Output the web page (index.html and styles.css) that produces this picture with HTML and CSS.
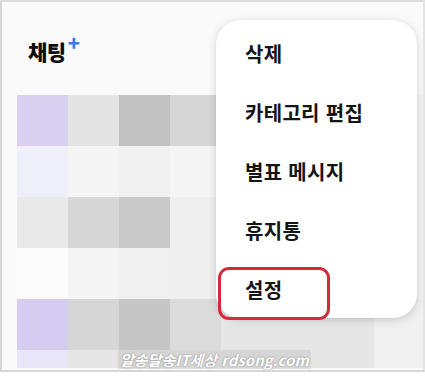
FILE: index.html
```html
<!DOCTYPE html>
<html lang="ko">
<head>
<meta charset="utf-8">
<link rel="stylesheet" href="styles.css">
</head>
<body>
<div class="frame">
  <div class="header">
    <h1 class="title">채팅<span class="plus">+</span></h1>
  </div>
  <div class="mosaic">
    <div class="t c-lav"></div><div class="t c-e4"></div><div class="t c-c2"></div><div class="t c-d6"></div><div class="t c-f0"></div><div class="t c-f4"></div><div class="t c-f4"></div><div class="t c-f4"></div>
    <div class="t c-lav2"></div><div class="t c-f5"></div><div class="t c-f1"></div><div class="t c-f5"></div><div class="t c-f4"></div><div class="t c-f4"></div><div class="t c-f4"></div><div class="t c-f4"></div>
    <div class="t c-e9"></div><div class="t c-d7"></div><div class="t c-c9"></div><div class="t c-ef"></div><div class="t c-f0"></div><div class="t c-f4"></div><div class="t c-f4"></div><div class="t c-f4"></div>
    <div class="t c-fb"></div><div class="t c-f5"></div><div class="t c-f0"></div><div class="t c-ef"></div><div class="t c-f0"></div><div class="t c-f4"></div><div class="t c-f4"></div><div class="t c-f4"></div>
    <div class="t c-lav3"></div><div class="t c-d6"></div><div class="t c-c6"></div><div class="t c-db"></div><div class="t c-e6"></div><div class="t c-e6"></div><div class="t c-e6"></div><div class="t c-f0"></div>
    <div class="t c-lav4"></div><div class="t c-e6"></div><div class="t c-e6"></div><div class="t c-e6"></div><div class="t c-e6"></div><div class="t c-e6"></div><div class="t c-e6"></div><div class="t c-f0"></div>
  </div>
  <div class="watermark">알송달송IT세상 rdsong.com</div>
  <ul class="menu">
    <li class="item">삭제</li>
    <li class="item">카테고리 편집</li>
    <li class="item">별표 메시지</li>
    <li class="item">휴지통</li>
    <li class="item">설정</li>
    <li class="highlight"></li>
  </ul>
</div>
</body>
</html>
```

FILE: styles.css
```css
* { box-sizing: border-box; }
html, body { margin: 0; padding: 0; }
body {
  width: 425px;
  height: 376px;
  overflow: hidden;
  background: #ffffff;
  font-family: "Noto Sans CJK KR", "Noto Sans", sans-serif;
}
.frame {
  position: relative;
  width: 425px;
  height: 372px;
  background: #fafafa;
  border-left: 2px solid #d6d6d6;
  border-top: 2px solid #dcdcdc;
  border-right: 2px solid #e4e4e4;
  border-bottom: 2px solid #d6d6d6;
  overflow: hidden;
}
.header {
  padding: 36px 0 0 26px;
  height: 93px;
}
.title {
  margin: 0;
  font-size: 21px;
  line-height: 26px;
  font-weight: 900;
  color: #0d0d0d;
  letter-spacing: -0.5px;
}
.plus {
  display: inline-block;
  vertical-align: top;
  margin-left: 2px;
  margin-top: -8px;
  font-size: 20px;
  font-weight: 900;
  color: #3a7cf0;
}
.mosaic {
  margin-left: 15px;
  display: grid;
  grid-template-columns: repeat(8, 51px);
  grid-template-rows: repeat(5, 51px) 18px;
}
.t { width: 51px; }
.c-lav { background: #d8d0f1; }
.c-lav2 { background: #efeffa; }
.c-lav3 { background: #d4ccf1; }
.c-lav4 { background: #e8e6f8; }
.c-e4 { background: #e4e4e4; }
.c-c2 { background: #c2c2c2; }
.c-d6 { background: #d6d6d6; }
.c-f0 { background: #f0f0f0; }
.c-f1 { background: #f1f1f1; }
.c-f4 { background: #f4f4f4; }
.c-f5 { background: #f5f5f5; }
.c-e9 { background: #e9e9e9; }
.c-d7 { background: #d7d7d7; }
.c-c9 { background: #c9c9c9; }
.c-ef { background: #efefef; }
.c-fb { background: #fbfbfb; }
.c-c6 { background: #c6c6c6; }
.c-db { background: #dbdbdb; }
.c-e6 { background: #e6e6e6; }
.watermark {
  position: absolute;
  left: 116px;
  top: 348px;
  font-size: 15px;
  line-height: 19px;
  font-weight: 700;
  font-style: italic;
  color: #ffffff;
  background: rgba(200, 200, 200, 0.55);
  padding: 0 2px;
  text-shadow: 0 0 2px #9a9a9a, 0 0 1px #8a8a8a;
  letter-spacing: 0;
}
.menu {
  position: absolute;
  left: 214px;
  top: 18px;
  width: 201px;
  height: 298px;
  margin: 0;
  padding: 4px 0 0 0;
  list-style: none;
  background: #ffffff;
  border-radius: 24px;
  box-shadow: 0 2px 8px rgba(0, 0, 0, 0.16), 0 0 2px rgba(0, 0, 0, 0.06);
}
.item {
  height: 59px;
  line-height: 59px;
  padding-left: 29px;
  font-size: 20px;
  font-weight: 700;
  color: #151515;
  letter-spacing: 0.3px;
}
.highlight {
  position: absolute;
  left: 2px;
  top: 247px;
  width: 112px;
  height: 53px;
  border: 3px solid #d22b3b;
  border-radius: 11px;
}
```
